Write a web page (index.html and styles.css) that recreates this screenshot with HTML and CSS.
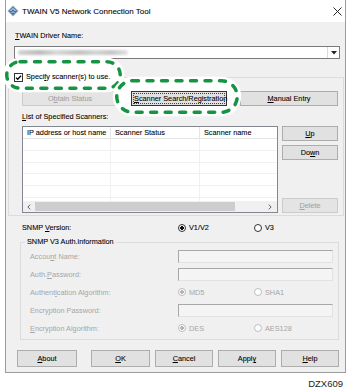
FILE: index.html
```html
<!DOCTYPE html>
<html lang="en">
<head>
  <meta charset="UTF-8">
  <title>TWAIN V5 Network Connection Tool</title>
  <link rel="stylesheet" href="styles.css">
</head>
<body>
  <div class="win">
    <div class="titlebar">
      <svg class="app-icon" viewBox="0 0 12 12">
        <path d="M6 0.5 L11.5 6 L6 11.5 L0.5 6 Z" fill="#8aa4bf"/>
        <path d="M6 2 L10 6 L6 10 L2 6 Z" fill="#3d6c9e"/>
        <path d="M3.5 6 L6 3.5 L8.5 6" stroke="#fff" stroke-width="1" fill="none"/>
        <path d="M4.5 8 L6 6.5 L7.5 8" stroke="#d9e3ee" stroke-width="1" fill="none"/>
      </svg>
      <span class="title">TWAIN V5 Network Connection Tool</span>
      <svg class="close" viewBox="0 0 9 9">
        <path d="M0.5 0.5 L8.5 8.5 M8.5 0.5 L0.5 8.5" stroke="#111" stroke-width="0.9"/>
      </svg>
    </div>

    <div class="client">
      <div class="label driver-label"><u>T</u>WAIN Driver Name:</div>
      <div class="combo">
        <div class="combo-text"><span class="smudge"></span></div>
        <div class="combo-btn">
          <svg viewBox="0 0 6 4" class="combo-arrow"><path d="M0 0 H6 L3 3.5 Z" fill="#222"/></svg>
        </div>
      </div>

      <fieldset class="group scan-group">
        <legend class="scan-legend">
          <span class="spot spot-check">
            <svg class="ring ring-check" viewBox="0 0 125 38">
              <rect x="5.75" y="5.75" width="113.5" height="26.5" rx="13.25" fill="#fff" stroke="#fff" stroke-width="8"/>
              <rect x="5.75" y="5.75" width="113.5" height="26.5" rx="13.25" fill="none" stroke="#179443" stroke-width="3.5" stroke-dasharray="6 8.5" stroke-linecap="round"/>
            </svg>
            <svg class="checkbox" viewBox="0 0 9 9">
              <rect x="0.5" y="0.5" width="8" height="8" fill="#fff" stroke="#333"/>
              <path d="M2 4.6 L3.7 6.3 L7 2.7" stroke="#000" stroke-width="1.3" fill="none"/>
            </svg>
            <span>Speci<u>f</u>y scanner(s) to use.</span>
          </span>
        </legend>

        <div class="btn-row">
          <div class="btn btn-obtain is-disabled">O<u>b</u>tain Status</div>
          <div class="spot spot-search">
            <svg class="ring ring-search" viewBox="0 0 132 43">
              <rect x="5.75" y="5.75" width="120.5" height="31.5" rx="15.75" fill="#fff" stroke="#fff" stroke-width="8"/>
              <rect x="5.75" y="5.75" width="120.5" height="31.5" rx="15.75" fill="none" stroke="#179443" stroke-width="3.5" stroke-dasharray="6 8.5" stroke-linecap="round"/>
            </svg>
            <div class="btn btn-search"><span><u>S</u>canner Search/Registration</span></div>
          </div>
          <div class="btn btn-manual"><u>M</u>anual Entry</div>
        </div>

        <div class="label list-label"><u>L</u>ist of Specified Scanners:</div>

        <div class="list-area">
          <div class="table">
            <div class="thead">
              <div class="th">IP address or host name</div>
              <div class="th">Scanner Status</div>
              <div class="th">Scanner name</div>
            </div>
            <div class="rows">
              <div class="row"><i></i><i></i><i></i></div>
              <div class="row"><i></i><i></i><i></i></div>
              <div class="row row-short"><i></i><i></i><i></i></div>
              <div class="row"><i></i><i></i><i></i></div>
              <div class="row"><i></i><i></i><i></i></div>
              <div class="row row-rest"><i></i><i></i><i></i></div>
            </div>
            <div class="hscroll">
              <svg class="scroll-arrow" viewBox="0 0 4 6"><path d="M3.2 0.6 L0.9 3 L3.2 5.4" stroke="#606060" stroke-width="1" fill="none"/></svg>
              <div class="scroll-thumb"></div>
              <svg class="scroll-arrow scroll-right" viewBox="0 0 4 6"><path d="M0.8 0.6 L3.1 3 L0.8 5.4" stroke="#606060" stroke-width="1" fill="none"/></svg>
            </div>
          </div>
          <div class="side-btns">
            <div class="btn"><u>U</u>p</div>
            <div class="btn btn-down">Do<u>w</u>n</div>
            <div class="btn btn-delete is-disabled"><u>D</u>elete</div>
          </div>
        </div>
      </fieldset>

      <div class="snmp-row">
        <div class="snmp-label">SNMP <u>V</u>ersion:</div>
        <div class="radio-item"><span class="radio is-on"></span>V1/V2</div>
        <div class="radio-item"><span class="radio"></span>V3</div>
      </div>

      <fieldset class="group auth-group">
        <legend class="auth-legend">SNMP V3 Auth.information</legend>
        <div class="auth-row">
          <div class="auth-label">Accou<u>n</u>t Name:</div>
          <div class="field"></div>
        </div>
        <div class="auth-row">
          <div class="auth-label">Auth.<u>P</u>assword:</div>
          <div class="field"></div>
        </div>
        <div class="auth-row">
          <div class="auth-label">Authent<u>i</u>cation Algorithm:</div>
          <div class="radio-item"><span class="radio is-on"></span>MD5</div>
          <div class="radio-item"><span class="radio"></span>SHA1</div>
        </div>
        <div class="auth-row">
          <div class="auth-label">Encr<u>y</u>ption Password:</div>
          <div class="field"></div>
        </div>
        <div class="auth-row">
          <div class="auth-label"><u>E</u>ncryption Algorithm:</div>
          <div class="radio-item"><span class="radio is-on"></span>DES</div>
          <div class="radio-item"><span class="radio"></span>AES128</div>
        </div>
      </fieldset>

      <div class="foot">
        <div class="btn btn-about"><u>A</u>bout</div>
        <div class="btn btn-ok"><u>O</u>K</div>
        <div class="btn"><u>C</u>ancel</div>
        <div class="btn">Appl<u>y</u></div>
        <div class="btn"><u>H</u>elp</div>
      </div>
    </div>
  </div>

  <div class="fig-code">DZX609</div>
</body>
</html>
```

FILE: styles.css
```css
* {
  box-sizing: border-box;
}

body {
  margin: 0;
  background: #fff;
  font-family: 'Liberation Sans', Arial, sans-serif;
  font-size: 7.3px;
  color: #000;
  -webkit-text-stroke: 0.08px;
}

u {
  text-decoration: underline;
  text-underline-offset: 1px;
  text-decoration-thickness: 0.6px;
}

.win {
  margin-left: 5px;
  width: 341px;
  border: 1px solid #9c9c9c;
  border-top: none;
  background: #f0f0f0;
}

.titlebar {
  height: 22px;
  background: #fff;
  display: flex;
  align-items: center;
  padding-left: 1px;
}

.app-icon {
  width: 12px;
  height: 12px;
  margin-right: 3px;
}

.title {
  flex: 1;
  font-size: 8px;
}

.close {
  width: 9px;
  height: 9px;
  margin-right: 3px;
}

.client {
  padding: 9px 0 5px;
}

.label {
  height: 9px;
  line-height: 9px;
  white-space: nowrap;
}

.driver-label {
  margin-left: 9px;
}

.combo {
  margin: 6px 0 0 8px;
  width: 326px;
  height: 13px;
  background: #fff;
  border: 1px solid #7a7a7a;
  display: flex;
}

.combo-text {
  flex: 1;
  display: flex;
  align-items: center;
  padding-left: 3px;
}

.smudge {
  width: 110px;
  height: 5px;
  border-radius: 2px;
  background: linear-gradient(90deg, #d2d2d2, #bdbdbd 20%, #d8d8d8 35%, #c2c2c2 55%, #d4d4d4 70%, #c6c6c6 85%, #e2e2e2);
  filter: blur(0.8px);
}

.combo-btn {
  width: 12px;
  border-left: 1px solid #dadada;
  display: flex;
  align-items: center;
  justify-content: center;
}

.combo-arrow {
  width: 6px;
  height: 4px;
}

/* group boxes */
.group {
  border: 1px solid #dcdcdc;
  margin: 0;
  padding: 0;
  min-width: 0;
}

.scan-group {
  margin: 13px 0 0 2px;
  width: 336px;
  padding-bottom: 2px;
}

.scan-legend {
  margin-left: 5px;
  padding: 0;
  height: 10px;
  line-height: 10px;
}

.spot {
  position: relative;
  z-index: 1;
}

.ring {
  position: absolute;
  z-index: -1;
}

.spot-check {
  display: flex;
  align-items: center;
  height: 10px;
  white-space: nowrap;
}

.ring-check {
  left: -13px;
  top: -16px;
  width: 125px;
  height: 38px;
}

.checkbox {
  width: 9px;
  height: 9px;
  margin-right: 3px;
}

.btn-row {
  display: flex;
  margin: 9px 0 0 13px;
}

.btn {
  height: 15px;
  background: #e1e1e1;
  border: 1px solid #adadad;
  display: flex;
  align-items: center;
  justify-content: center;
  white-space: nowrap;
}

.btn.is-disabled {
  background: #e4e4e4;
  border-color: #cbcbcb;
  color: #a3a3a3;
}

.btn-obtain {
  width: 96px;
}

.spot-search {
  margin-left: 13px;
  display: flex;
}

.ring-search {
  left: -20px;
  top: -16px;
  width: 132px;
  height: 43px;
}

.btn-search {
  width: 96px;
  border-color: #333;
  padding: 2px;
}

.btn-search span {
  display: block;
  width: 100%;
  height: 100%;
  line-height: 9px;
  text-align: center;
  outline: 1px dotted #444;
}

.btn-manual {
  width: 98px;
  margin-left: 13px;
}

.list-label {
  margin: 6px 0 0 13px;
}

.list-area {
  display: flex;
  margin: 5px 0 0 13px;
}

.table {
  width: 256px;
  height: 87px;
  border: 1px solid #828790;
  background: #fff;
  display: flex;
  flex-direction: column;
}

.thead,
.row {
  display: grid;
  grid-template-columns: 88px 89px 1fr;
}

.thead {
  height: 12px;
  border-bottom: 1px solid #e5e5e5;
}

.th {
  padding-left: 4px;
  line-height: 11px;
  border-right: 1px solid #e5e5e5;
  white-space: nowrap;
  overflow: hidden;
}

.th:last-child {
  border-right: none;
}

.rows {
  flex: 1;
  overflow: hidden;
}

.row {
  height: 12px;
  border-bottom: 1px solid #f0f0f0;
}

.row-short {
  height: 11px;
}

.row-rest {
  height: 3px;
  border-bottom: none;
}

.row i {
  border-right: 1px solid #f0f0f0;
}

.row i:last-child {
  border-right: none;
}

.hscroll {
  height: 11px;
  background: #f0f0f0;
  display: flex;
  align-items: center;
}

.scroll-arrow {
  width: 4px;
  height: 6px;
  margin: 0 4px 0 4px;
}

.scroll-thumb {
  width: 200px;
  height: 9px;
  background: #cdcdcd;
}

.scroll-right {
  margin-left: auto;
  margin-right: 5px;
}

.side-btns {
  width: 56px;
  margin-left: 4px;
  display: flex;
  flex-direction: column;
}

.btn-down {
  margin-top: 4px;
}

.btn-delete {
  margin-top: auto;
}

/* SNMP */
.snmp-row {
  display: flex;
  align-items: center;
  height: 9px;
  margin: 7px 0 0 16px;
}

.snmp-label {
  width: 156px;
}

.radio-item {
  display: flex;
  align-items: center;
  width: 76px;
  white-space: nowrap;
}

.radio {
  width: 8px;
  height: 8px;
  border: 1px solid #333;
  border-radius: 50%;
  background: #fff;
  margin-right: 3px;
}

.radio.is-on {
  background: radial-gradient(circle, #111 0 1.6px, #fff 2.1px);
}

.auth-group {
  margin: 5px 0 0 14px;
  width: 319px;
  padding-bottom: 2px;
}

.auth-legend {
  margin-left: 4px;
  padding: 0 2px;
  height: 10px;
  line-height: 10px;
}

.auth-row {
  display: flex;
  align-items: center;
  height: 18px;
  padding-left: 9px;
  color: #a6a6a6;
  -webkit-text-stroke: 0;
}

.auth-label {
  width: 148px;
  white-space: nowrap;
}

.field {
  width: 155px;
  height: 13px;
  border: 1px solid;
  border-color: #a8a8a8 #e2e2e2 #e2e2e2 #a8a8a8;
  background: #f4f4f4;
}

.auth-row .radio {
  border-color: #bdbdbd;
}

.auth-row .radio.is-on {
  background: radial-gradient(circle, #b5b5b5 0 1.6px, #fff 2.1px);
}

.foot {
  display: flex;
  margin: 10px 0 0 11px;
}

.foot .btn {
  height: 17px;
  width: 58px;
  margin-left: 5px;
}

.foot .btn-about {
  width: 60px;
  margin-left: 0;
}

.foot .btn-ok {
  width: 59px;
  margin-left: 14px;
}

.fig-code {
  width: 343px;
  margin-top: 5px;
  text-align: right;
  font-size: 9.5px;
  line-height: 11px;
  color: #222;
  -webkit-text-stroke: 0;
}
```
